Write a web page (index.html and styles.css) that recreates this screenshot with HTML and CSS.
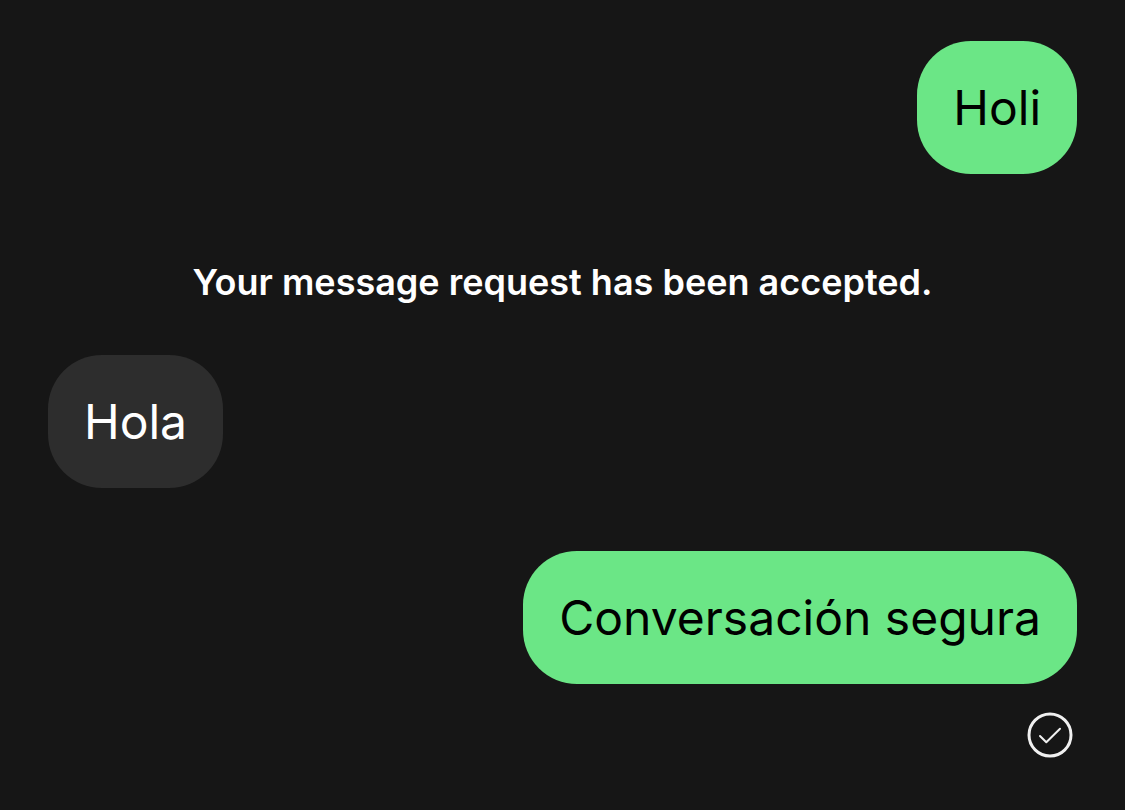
FILE: index.html
```html
<!DOCTYPE html>
<html lang="es">
<head>
    <meta charset="UTF-8">
    <meta name="viewport" content="width=device-width, initial-scale=1.0">
    <title>Chat</title>
    <link rel="stylesheet" href="styles.css">
</head>
<body>

    <main>
        <div class="message-bubble user-message">Holi</div>
        <p class="notice" lang="en">Your message request has been accepted.</p>
        <div class="message-bubble contact-message">Hola</div>
        <div class="message-bubble user-message">Conversación segura</div>
        <svg class="status-icon" viewBox="0 0 46 46" role="img" aria-label="Sent">
            <circle cx="23" cy="23" r="21"/>
            <path class="check" d="M13 24l6.3 6.3L33 16.7"/>
        </svg>
    </main>

</body>
</html>
```

FILE: styles.css
```css
:root {
    --background-color: #161616;
    --user-color: #6be686; /* Light green */
    --contact-color: #2d2d2d; /* Dark grey */
}

* {
    box-sizing: border-box;
}

body {
    font-family: Inter, sans-serif;
    background-color: var(--background-color);
    color: #ffffff;
    margin: 0;
}

main {
    display: flex;
    flex-direction: column;
    min-height: 100vh;
    padding: 41px 48px;
}

.message-bubble {
    max-width: 80%;
    padding: 36px;
    border-radius: 54px;
    font-size: 48px;
    line-height: 61px;
}

.user-message {
    align-self: flex-end;
    background-color: var(--user-color);
    color: #000000;
}

.contact-message {
    align-self: flex-start;
    background-color: var(--contact-color);
    margin-bottom: 63px;
}

.notice {
    margin: 87px 0 51px;
    font-size: 36px;
    font-weight: 600;
    line-height: 43px;
    text-align: center;
}

.status-icon {
    align-self: flex-end;
    width: 46px;
    height: 46px;
    margin: 28px 4px 0;
    fill: none;
    stroke: #f0f0f0;
    stroke-width: 3;
}

.check {
    stroke-width: 2;
    stroke-linecap: round;
    stroke-linejoin: round;
}
```
